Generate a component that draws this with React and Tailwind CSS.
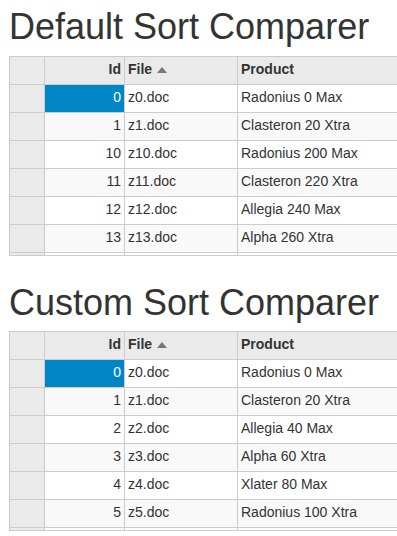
const names = ['Radonius', 'Clasteron', 'Allegia', 'Alpha', 'Xlater'];

const makeRow = (id) => ({
  id,
  file: `z${id}.doc`,
  product: `${names[id % 5]} ${id * 20} ${id % 2 === 0 ? 'Max' : 'Xtra'}`,
});

const defaultRows = [0, 1, 10, 11, 12, 13].map(makeRow);
const customRows = [0, 1, 2, 3, 4, 5].map(makeRow);

const cell = 'h-[28px] flex items-center pb-[2px] px-[3px] border-r border-b border-[#cccccc] whitespace-nowrap overflow-hidden';

const SortArrow = () => (
  <svg width="10" height="6" viewBox="0 0 10 6" className="ml-[5px] mt-[1px]">
    <path d="M0 6 L5 0 L10 6 Z" fill="#777777" />
  </svg>
);

const Grid = ({ rows }) => (
  <div className="h-[200px] w-[460px] overflow-hidden border-t border-l border-b border-[#cccccc]">
    <div className="grid grid-cols-[35px_80px_113px_230px] text-[14px] text-[#333333]">
      {/* header row */}
      <div className={`${cell} bg-[#eaeaea]`} />
      <div className={`${cell} bg-[#eaeaea] justify-end font-bold`}>Id</div>
      <div className={`${cell} bg-[#eaeaea] font-bold`}>
        File
        <SortArrow />
      </div>
      <div className={`${cell} bg-[#eaeaea] font-bold`}>Product</div>

      {rows.map((r, i) => {
        const bg = i % 2 === 1 ? 'bg-[#f9f9f9]' : 'bg-white';
        const selected = i === 0;
        return [
          <div key={`h${r.id}`} className={`${cell} bg-[#eaeaea]`} />,
          <div
            key={`i${r.id}`}
            className={`${cell} justify-end ${selected ? 'bg-[#0085c7] text-white' : bg}`}
          >
            {r.id}
          </div>,
          <div key={`f${r.id}`} className={`${cell} ${bg}`}>{r.file}</div>,
          <div key={`p${r.id}`} className={`${cell} ${bg}`}>{r.product}</div>,
        ];
      })}

      {/* next row, scrolled out of view */}
      <div className={`${cell} bg-[#eaeaea]`} />
      <div className={`${cell} bg-white`} />
      <div className={`${cell} bg-white`} />
      <div className={`${cell} bg-white`} />
    </div>
  </div>
);

export default function App() {
  return (
    <div className="w-[397px] min-h-[536px] overflow-hidden bg-white pl-[9px] font-['Liberation_Sans',Arial,sans-serif] text-[#333333]">
      <h2 className="mt-[7px] mb-[9px] text-[36px] leading-[40px] whitespace-nowrap">Default Sort Comparer</h2>
      <Grid rows={defaultRows} />
      <h2 className="mt-[27px] mb-[8px] text-[36px] leading-[40px] whitespace-nowrap">Custom Sort Comparer</h2>
      <Grid rows={customRows} />
    </div>
  );
}
